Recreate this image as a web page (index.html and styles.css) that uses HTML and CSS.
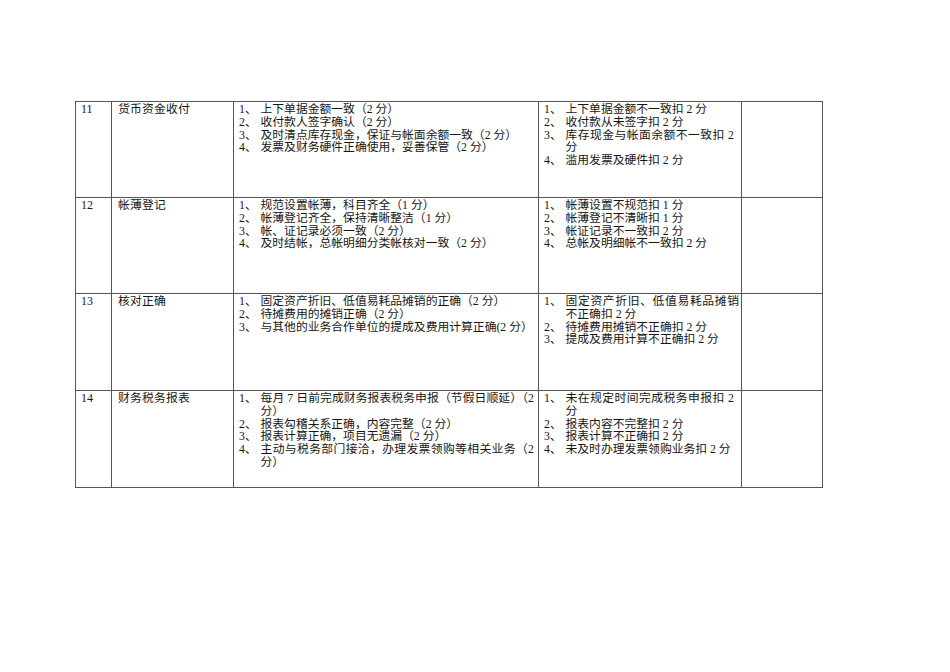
FILE: index.html
```html
<!DOCTYPE html>
<html lang="zh-CN">
<head>
<meta charset="utf-8">
<title>考核表</title>
<link rel="stylesheet" href="styles.css">
</head>
<body>
<div class="page">
  <div class="sheet">
    <div class="cell no">11</div>
    <div class="cell name">货币资金收付</div>
    <div class="cell std">
      <div class="item"><span class="num">1、</span><span class="txt">上下单据金额一致（2 分）</span></div>
      <div class="item"><span class="num">2、</span><span class="txt">收付款人签字确认（2 分）</span></div>
      <div class="item"><span class="num">3、</span><span class="txt">及时清点库存现金，保证与帐面余额一致（2 分）</span></div>
      <div class="item"><span class="num">4、</span><span class="txt">发票及财务硬件正确使用，妥善保管（2 分）</span></div>
    </div>
    <div class="cell ded">
      <div class="item"><span class="num">1、</span><span class="txt">上下单据金额不一致扣 2 分</span></div>
      <div class="item"><span class="num">2、</span><span class="txt">收付款从未签字扣 2 分</span></div>
      <div class="item"><span class="num">3、</span><span class="txt"><span class="jl jd">库存现金与帐面余额不一致扣 2</span>分</span></div>
      <div class="item"><span class="num">4、</span><span class="txt">滥用发票及硬件扣 2 分</span></div>
    </div>
    <div class="cell blank"></div>

    <div class="cell no">12</div>
    <div class="cell name">帐薄登记</div>
    <div class="cell std">
      <div class="item"><span class="num">1、</span><span class="txt">规范设置帐薄，科目齐全（1 分）</span></div>
      <div class="item"><span class="num">2、</span><span class="txt">帐薄登记齐全，保持清晰整洁（1 分）</span></div>
      <div class="item"><span class="num">3、</span><span class="txt">帐、证记录必须一致（2 分）</span></div>
      <div class="item"><span class="num">4、</span><span class="txt">及时结帐，总帐明细分类帐核对一致（2 分）</span></div>
    </div>
    <div class="cell ded">
      <div class="item"><span class="num">1、</span><span class="txt">帐薄设置不规范扣 1 分</span></div>
      <div class="item"><span class="num">2、</span><span class="txt">帐薄登记不清晰扣 1 分</span></div>
      <div class="item"><span class="num">3、</span><span class="txt">帐证记录不一致扣 2 分</span></div>
      <div class="item"><span class="num">4、</span><span class="txt">总帐及明细帐不一致扣 2 分</span></div>
    </div>
    <div class="cell blank"></div>

    <div class="cell no">13</div>
    <div class="cell name">核对正确</div>
    <div class="cell std">
      <div class="item"><span class="num">1、</span><span class="txt">固定资产折旧、低值易耗品摊销的正确（2 分）</span></div>
      <div class="item"><span class="num">2、</span><span class="txt">待摊费用的摊销正确（2 分）</span></div>
      <div class="item"><span class="num">3、</span><span class="txt">与其他的业务合作单位的提成及费用计算正确(2 分）</span></div>
    </div>
    <div class="cell ded">
      <div class="item"><span class="num">1、</span><span class="txt"><span class="jl">固定资产折旧、低值易耗品摊销</span>不正确扣 2 分</span></div>
      <div class="item"><span class="num">2、</span><span class="txt">待摊费用摊销不正确扣 2 分</span></div>
      <div class="item"><span class="num">3、</span><span class="txt">提成及费用计算不正确扣 2 分</span></div>
    </div>
    <div class="cell blank"></div>

    <div class="cell no">14</div>
    <div class="cell name">财务税务报表</div>
    <div class="cell std">
      <div class="item"><span class="num">1、</span><span class="txt"><span class="jl">每月 7 日前完成财务报表税务申报（节假日顺延）（2</span>分）</span></div>
      <div class="item"><span class="num">2、</span><span class="txt">报表勾稽关系正确，内容完整（2 分）</span></div>
      <div class="item"><span class="num">3、</span><span class="txt">报表计算正确，项目无遗漏（2 分）</span></div>
      <div class="item"><span class="num">4、</span><span class="txt"><span class="jl">主动与税务部门接洽，办理发票领购等相关业务（2</span>分）</span></div>
    </div>
    <div class="cell ded">
      <div class="item"><span class="num">1、</span><span class="txt"><span class="jl jd">未在规定时间完成税务申报扣 2</span>分</span></div>
      <div class="item"><span class="num">2、</span><span class="txt">报表内容不完整扣 2 分</span></div>
      <div class="item"><span class="num">3、</span><span class="txt">报表计算不正确扣 2 分</span></div>
      <div class="item"><span class="num">4、</span><span class="txt">未及时办理发票领购业务扣 2 分</span></div>
    </div>
    <div class="cell blank"></div>
  </div>
</div>
</body>
</html>
```
FILE: styles.css
```css
html, body {
  margin: 0;
  padding: 0;
  background: #ffffff;
}

.page {
  padding: 101px 0 0 75px;
  font-family: "Liberation Serif", "Noto Sans CJK SC", serif;
  font-size: 11.8px;
  line-height: 12.8px;
  color: #161616;
}

.sheet {
  display: grid;
  grid-template-columns: 36px 122px 305px 203px 81px;
  grid-template-rows: 96px 96px 97px 97px;
  width: max-content;
  border-left: 1px solid #555;
  border-top: 1px solid #555;
}

.cell {
  box-sizing: border-box;
  border-right: 1px solid #555;
  border-bottom: 1px solid #555;
  padding: 1px 2px 0 5px;
  white-space: nowrap;
  overflow: hidden;
}

.no {
  font-size: 12px;
}

.name {
  padding-left: 6px;
  letter-spacing: 0.2px;
}

.std {
  padding-right: 4px;
}

.ded {
  padding-right: 2px;
}

.item {
  display: flex;
}

.num {
  flex: none;
  width: 21.5px;
}

.txt {
  flex: 1 1 auto;
  min-width: 0;
}

.jl {
  display: block;
  white-space: normal;
  text-align: justify;
  text-align-last: justify;
  text-justify: inter-character;
}

.jd {
  padding-right: 5px;
}
```
